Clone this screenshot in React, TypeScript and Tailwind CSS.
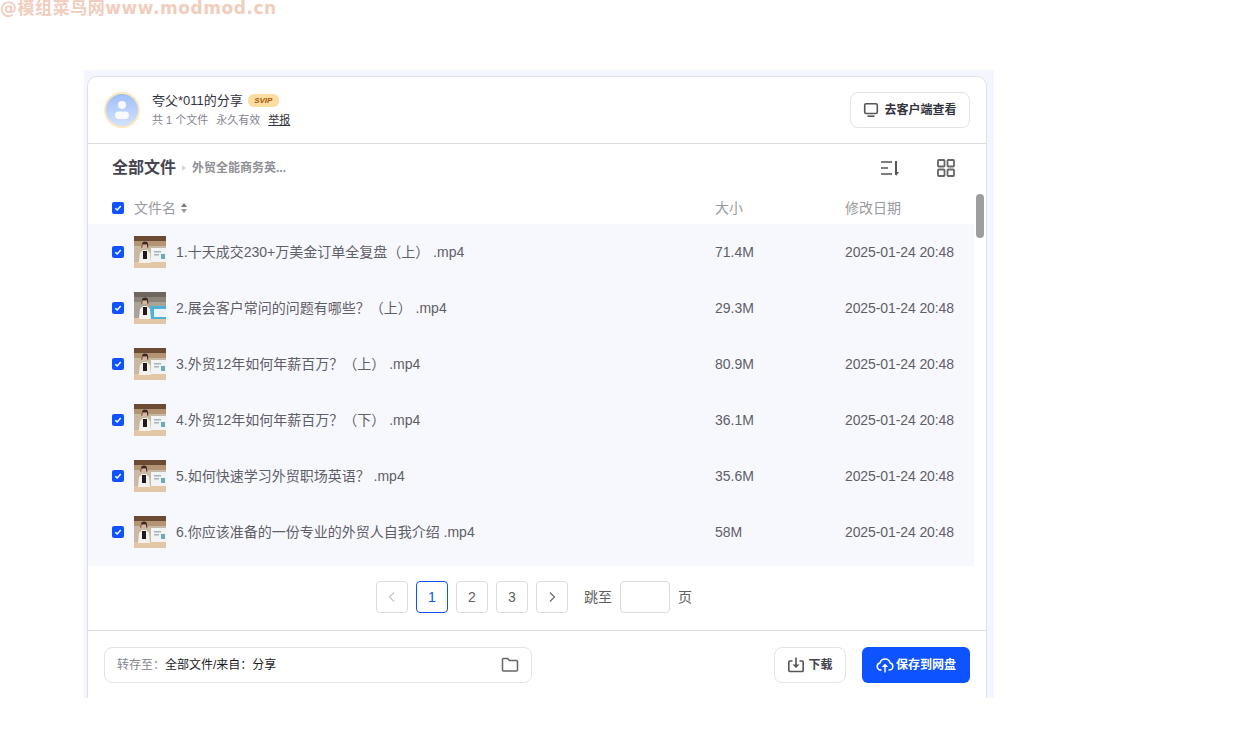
import React from "react";

const rows = [
  { name: "1.十天成交230+万美金订单全复盘（上） .mp4", size: "71.4M", v: 0 },
  { name: "2.展会客户常问的问题有哪些？（上） .mp4", size: "29.3M", v: 1 },
  { name: "3.外贸12年如何年薪百万？（上） .mp4", size: "80.9M", v: 0 },
  { name: "4.外贸12年如何年薪百万？（下） .mp4", size: "36.1M", v: 0 },
  { name: "5.如何快速学习外贸职场英语？ .mp4", size: "35.6M", v: 2 },
  { name: "6.你应该准备的一份专业的外贸人自我介绍 .mp4", size: "58M", v: 3 },
];

function Check() {
  return (
    <span className="flex h-3 w-3 shrink-0 items-center justify-center rounded-[2px] bg-[#0d53ff]">
      <svg width="8" height="8" viewBox="0 0 8 8" fill="none">
        <path d="M1.3 4.2 3.2 6 6.7 2" stroke="#fff" strokeWidth="1.5" />
      </svg>
    </span>
  );
}

function Thumb({ v }: { v: number }) {
  const x = v === 2 || v === 3 ? -1 : 0;
  return (
    <svg width="32" height="32" viewBox="0 0 32 32" className="shrink-0">
      <rect width="32" height="32" fill={v === 1 ? "#a9a297" : "#c9b8a3"} />
      <rect width="32" height="5" fill={v === 1 ? "#6f675e" : "#6b4a36"} />
      <rect y="5" width="32" height="5" fill={v === 1 ? "#8c8479" : "#b59472"} />
      <rect y="26" width="32" height="6" fill="#e2c6a6" />
      {v === 1 ? (
        <>
          <rect x="16" y="14" width="16" height="13" fill="#4cb2d6" />
          <rect x="20" y="17" width="12" height="8" fill="#eef5f8" />
        </>
      ) : (
        <>
          <rect x="17" y="12" width="15" height="14" fill="#f2f3f3" />
          <rect x="20" y="15" width="7" height="1.5" fill="#a7b3ba" />
          <rect x="20" y="18" width="5" height="1.5" fill="#a7b3ba" />
          <rect x="27" y="18" width="4" height="5" fill="#6fa8b8" />
        </>
      )}
      <circle cx={7 + x + 4} cy="9.5" r="3" fill="#d9b49c" />
      <path d={`M${7 + x + 1} 8.5a3 3 0 0 1 6 0l.4 3h-1.2l-.2-3h-4.6l-.2 3h-1Z`} fill="#3a2a22" />
      <path d={`M${5 + x} 27l1-10 3-3h4l3 3 1 10Z`} fill="#f4f1ee" />
      <rect x={9 + x} y="15" width="4" height="8" fill="#1f1b1d" />
    </svg>
  );
}

function PageBtn({ children, active }: { children: React.ReactNode; active?: boolean }) {
  return (
    <div
      className={`flex h-8 w-8 items-center justify-center rounded-[4px] border text-sm ${
        active ? "border-[#0d53ff] text-[#0d53ff]" : "border-[#dcdcdc] text-[#5f5f5f]"
      }`}
    >
      {children}
    </div>
  );
}

export default function App() {
  return (
    <div
      className="h-[749px] w-[1246px] overflow-hidden bg-white text-[#555]"
      style={{ fontFamily: '"Liberation Sans","Noto Sans CJK SC",sans-serif' }}
    >
      <div
        className="h-[70px] pl-0 text-[17px] font-bold leading-[17px] tracking-[0.55px] text-[#f0cdbd]"
        style={{ fontFamily: '"DejaVu Sans","Noto Sans CJK SC",sans-serif' }}
      >
        @模组菜鸟网www.modmod.cn
      </div>
      <div className="ml-[84px] h-[628px] w-[910px] overflow-hidden bg-[#f3f6fe] px-[3px] pt-[6px]">
        <div className="flex h-[640px] w-[900px] flex-col rounded-[10px] border border-[#dfe1e6] bg-white">
          {/* header */}
          <div className="flex h-[67px] shrink-0 items-center justify-between border-b border-[#dcdcdc] pl-4 pr-4">
            <div className="flex items-center gap-3">
              <svg width="36" height="36" viewBox="0 0 36 36">
                <defs>
                  <linearGradient id="av" x1="0" y1="0" x2="0" y2="1">
                    <stop offset="0" stopColor="#9dbdfb" />
                    <stop offset="1" stopColor="#d6e3fd" />
                  </linearGradient>
                </defs>
                <circle cx="18" cy="18" r="17" fill="url(#av)" stroke="#fbe8bf" strokeWidth="2" />
                <circle cx="18" cy="13" r="4" fill="#fff" opacity="0.9" />
                <rect x="11" y="19.5" width="14" height="7.5" rx="3.7" fill="#fff" opacity="0.9" />
              </svg>
              <div className="flex flex-col">
                <div className="flex h-[18px] items-center gap-[5px] text-[13px] text-[#33333f]">
                  <span>夸父*011的分享</span>
                  <span
                    className="flex h-[13px] w-[31px] items-center justify-center rounded-[6px] bg-[#fcdca0] text-[8px] font-bold italic text-[#a3590e]"
                  >
                    SVIP
                  </span>
                </div>
                <div className="mt-[3px] flex h-[16px] items-center gap-2 text-[11px] text-[#84848f]">
                  <span>共 1 个文件</span>
                  <span>永久有效</span>
                  <span className="text-[#33333f] underline">举报</span>
                </div>
              </div>
            </div>
            <div className="flex h-9 w-[120px] items-center justify-center gap-[5px] rounded-[8px] border border-[#e3e4e8] text-xs font-bold text-[#33333f]">
              <svg width="16" height="16" viewBox="0 0 16 16" fill="none">
                <rect x="1.7" y="1.7" width="12.6" height="9.8" rx="1.5" stroke="#555" strokeWidth="1.6" />
                <path d="M4.5 14.2h7" stroke="#555" strokeWidth="1.6" />
              </svg>
              去客户端查看
            </div>
          </div>
          {/* toolbar */}
          <div className="flex h-12 shrink-0 items-center justify-between pl-6 pr-[30px]">
            <div className="flex items-center">
              <span className="text-base font-bold text-[#45454f]">全部文件</span>
              <svg width="16" height="12" viewBox="0 0 16 12" className="shrink-0">
                <path d="M6 3l4 3-4 3Z" fill="#d5d5d8" />
              </svg>
              <span className="text-xs font-bold text-[#8f8f95]">外贸全能商务英...</span>
            </div>
            <div className="flex items-center gap-[36px]">
              <svg width="20" height="20" viewBox="0 0 20 20" fill="none" stroke="#555" strokeWidth="1.6">
                <path d="M1 4h11M1 10h7M1 16h11" />
                <path d="M16 3v14" strokeWidth="2" />
                <path d="M16 18l3-4h-3Z" fill="#555" stroke="none" />
              </svg>
              <svg width="20" height="20" viewBox="0 0 20 20" fill="none" stroke="#666" strokeWidth="1.8">
                <rect x="2" y="2" width="6.5" height="6.5" rx="0.8" />
                <rect x="11.5" y="2" width="6.5" height="6.5" rx="0.8" />
                <rect x="2" y="11.5" width="6.5" height="6.5" rx="0.8" />
                <rect x="11.5" y="11.5" width="6.5" height="6.5" rx="0.8" />
              </svg>
            </div>
          </div>
          {/* list + scrollbar */}
          <div className="flex h-[374px] shrink-0">
            <div className="flex w-[886px] shrink-0 flex-col">
              <div className="flex h-8 shrink-0 items-center pl-6 text-sm text-[#9a9aa0]">
                <Check />
                <span className="ml-2.5 w-[581px] shrink-0 flex items-center gap-[4px]">
                  文件名
                  <svg width="8" height="12" viewBox="0 0 8 12">
                    <path d="M4 1l3 4H1Z" fill="#777" />
                    <path d="M4 11l3-4H1Z" fill="#999" />
                  </svg>
                </span>
                <span className="w-[130px] shrink-0">大小</span>
                <span>修改日期</span>
              </div>
              <div className="flex-1 bg-[#f7f8fe]">
                {rows.map((r) => (
                  <div key={r.name} className="flex h-14 items-center pl-6 text-sm text-[#5f5f66]">
                    <Check />
                    <div className="ml-2.5">
                      <Thumb v={r.v} />
                    </div>
                    <span className="ml-2.5 w-[539px] shrink-0 whitespace-pre">{r.name}</span>
                    <span className="w-[130px] shrink-0">{r.size}</span>
                    <span className="tracking-[-0.1px]">2025-01-24 20:48</span>
                  </div>
                ))}
              </div>
            </div>
            <div className="ml-[2px] mt-[2px] h-11 w-2 rounded-full bg-[#9e9e9e]" />
          </div>
          {/* pagination */}
          <div className="flex h-[65px] shrink-0 items-center justify-center gap-2 border-b border-[#dcdcdc] pb-[2px] pr-[6px] text-sm text-[#5f5f5f]">
            <PageBtn>
              <svg width="10" height="12" viewBox="0 0 10 12" fill="none" stroke="#c4c4c4" strokeWidth="1.1">
                <path d="M7 1.5 2.5 6 7 10.5" />
              </svg>
            </PageBtn>
            <PageBtn active>1</PageBtn>
            <PageBtn>2</PageBtn>
            <PageBtn>3</PageBtn>
            <PageBtn>
              <svg width="10" height="12" viewBox="0 0 10 12" fill="none" stroke="#666" strokeWidth="1.1">
                <path d="M3 1.5 7.5 6 3 10.5" />
              </svg>
            </PageBtn>
            <span className="ml-2">跳至</span>
            <div className="h-8 w-[50px] rounded-[4px] border border-[#dcdcdc]" />
            <span>页</span>
          </div>
          {/* footer */}
          <div className="flex shrink-0 items-center justify-between px-4 pt-4">
            <div className="flex h-9 w-[428px] items-center justify-between rounded-[8px] border border-[#e3e4e8] pl-3 pr-3 text-xs">
              <div className="flex items-center">
                <span className="text-[#84848f]">转存至：</span>
                <span className="text-[#1c1c24]">全部文件/来自：分享</span>
              </div>
              <svg width="18" height="18" viewBox="0 0 18 18" fill="none" stroke="#666" strokeWidth="1.5">
                <path d="M1.5 14V3.5a1 1 0 0 1 1-1h4.2l1.6 2h7.2a1 1 0 0 1 1 1V14a1 1 0 0 1-1 1h-13a1 1 0 0 1-1-1Z" />
              </svg>
            </div>
            <div className="flex items-center gap-4">
              <div className="flex h-9 w-[72px] items-center justify-center gap-[3px] rounded-[8px] border border-[#e3e4e8] text-xs font-bold text-[#45454f]">
                <svg width="18" height="18" viewBox="0 0 18 18" fill="none" stroke="#555" strokeWidth="1.6">
                  <path d="M5.5 5H2.8a1 1 0 0 0-1 1v8.5a1 1 0 0 0 1 1h12.4a1 1 0 0 0 1-1V6a1 1 0 0 0-1-1h-2.7" />
                  <path d="M9 1.5V10" />
                  <path d="M5.5 8.5 9 12l3.5-3.5Z" fill="#555" stroke="none" />
                </svg>
                下载
              </div>
              <div className="flex h-9 w-[108px] items-center justify-center gap-[2px] rounded-[6px] bg-[#0d53ff] text-xs font-bold text-white">
                <svg width="18" height="18" viewBox="0 0 18 18" fill="none" stroke="#fff" strokeWidth="1.5">
                  <path d="M5.5 14H4.6a3.6 3.6 0 0 1-.6-7.1 5.2 5.2 0 0 1 10.1 0 3.6 3.6 0 0 1-.7 7.1h-.9" />
                  <path d="M9 16.5V9" />
                  <path d="M5.8 11 9 7.6l3.2 3.4Z" fill="#fff" stroke="none" />
                </svg>
                保存到网盘
              </div>
            </div>
          </div>
        </div>
      </div>
    </div>
  );
}
